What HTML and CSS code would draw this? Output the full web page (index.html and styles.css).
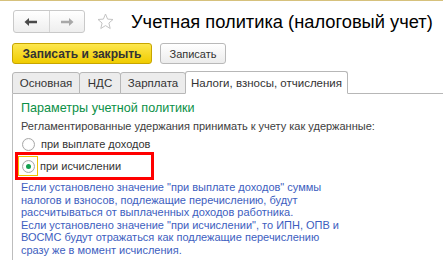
FILE: index.html
```html
<!DOCTYPE html>
<html lang="ru">
<head>
<meta charset="utf-8">
<link rel="stylesheet" href="styles.css">
</head>
<body>
<div class="topline"></div>
<div class="header">
  <div class="nav">
    <div class="navbtn"><svg width="14" height="10" viewBox="0 0 14 10"><path d="M0.5 5 L5 1 L5 3.8 L13 3.8 L13 6.2 L5 6.2 L5 9 Z" fill="#4a4a4a"/></svg></div>
    <div class="navbtn"><svg width="14" height="10" viewBox="0 0 14 10"><path d="M13.5 5 L9 1 L9 3.8 L1 3.8 L1 6.2 L9 6.2 L9 9 Z" fill="#a8a8a8"/></svg></div>
  </div>
  <svg class="star" width="17" height="17" viewBox="0 0 17 17"><path d="M8.5 1 L10.6 6.1 L16 6.5 L11.9 10 L13.2 15.5 L8.5 12.6 L3.8 15.5 L5.1 10 L1 6.5 L6.4 6.1 Z" fill="none" stroke="#c4c4c4" stroke-width="1"/></svg>
  <h1 class="title">Учетная политика (налоговый учет)</h1>
</div>
<div class="toolbar">
  <button class="btn primary">Записать и закрыть</button>
  <button class="btn">Записать</button>
</div>
<div class="tabs">
  <div class="tab t1">Основная</div>
  <div class="tab t2">НДС</div>
  <div class="tab t3">Зарплата</div>
  <div class="tab active">Налоги, взносы, отчисления</div>
  <div class="tabfill"></div>
</div>
<div class="panel">
  <div class="section">Параметры учетной политики</div>
  <div class="label">Регламентированные удержания принимать к учету как удержанные:</div>
  <div class="option">
    <span class="radio"></span><span class="optext">при выплате доходов</span>
  </div>
  <div class="redbox">
    <span class="focus"><span class="radio checked"></span></span><span class="optext2">при исчислении</span>
  </div>
  <div class="hint">Если установлено значение "при выплате доходов" суммы<br>налогов и взносов, подлежащие перечислению, будут<br>рассчитываться от выплаченных доходов работника.<br>Если установлено значение "при исчислении", то ИПН, ОПВ и<br>ВОСМС будут отражаться как подлежащие перечислению<br>сразу же в момент исчисления.</div>
</div>
</body>
</html>
```
FILE: styles.css
```css
html, body {
  margin: 0;
  padding: 0;
  background: #fff;
  width: 443px;
  height: 260px;
  overflow: hidden;
  font-family: "Liberation Sans", Arial, sans-serif;
  font-size: 11px;
  color: #333;
}
.topline {
  height: 1px;
  background: #d6c17c;
}
.header {
  display: flex;
  align-items: center;
  padding: 9px 0 0 13px;
  height: 23px;
}
.nav {
  flex-shrink: 0;
  display: flex;
  width: 72px;
  height: 23px;
  box-sizing: border-box;
  border: 1px solid #c9c9c9;
  border-radius: 3px;
  background: linear-gradient(#ffffff, #eeeeee);
}
.navbtn {
  flex: 1;
  display: flex;
  align-items: center;
  justify-content: center;
}
.navbtn + .navbtn {
  border-left: 1px solid #d4d4d4;
}
.star {
  flex-shrink: 0;
  margin-left: 12px;
}
.title {
  flex-shrink: 0;
  margin: 0 0 0 17px;
  font-weight: normal;
  font-size: 18.3px;
  line-height: 23px;
  color: #000;
  white-space: nowrap;
}
.toolbar {
  display: flex;
  gap: 8px;
  padding: 10px 0 0 12px;
}
.btn {
  flex-shrink: 0;
  height: 21px;
  box-sizing: border-box;
  border: 1px solid #b9b9b9;
  border-radius: 3px;
  background: linear-gradient(#ffffff, #ececec);
  font-family: "Liberation Sans", Arial, sans-serif;
  font-size: 11px;
  color: #333;
  padding: 0;
  width: 66px;
  white-space: nowrap;
}
.btn.primary {
  width: 140px;
  background: linear-gradient(#fde74f, #f0cc00);
  border-color: #c7a500;
  font-weight: bold;
  font-size: 12px;
  color: #333;
}
.tabs {
  display: flex;
  align-items: flex-end;
  margin-top: 7px;
  padding-left: 12px;
  height: 23px;
}
.tab {
  flex-shrink: 0;
  box-sizing: border-box;
  height: 22px;
  line-height: 20px;
  text-align: center;
  background: #ececec;
  border: 1px solid #b7b7b7;
  border-radius: 3px 3px 0 0;
  margin-right: -1px;
  white-space: nowrap;
  font-size: 11.5px;
}
.t1 { width: 68px; }
.t2 { width: 42px; }
.t3 { width: 66px; }
.tab.active {
  width: 163px;
  height: 23px;
  background: #fff;
  border-bottom-color: #fff;
  line-height: 22px;
  position: relative;
  z-index: 1;
}
.tabfill {
  flex: 1;
  border-bottom: 1px solid #b7b7b7;
}
.panel {
  margin-left: 12px;
  border-left: 1px solid #bdbdbd;
  padding: 6px 0 0 8px;
  height: 161px;
  box-sizing: content-box;
}
.section {
  color: #0a9046;
  font-size: 12.6px;
  line-height: 16px;
}
.label {
  margin-top: 3px;
  line-height: 14px;
  color: #404040;
}
.option {
  display: flex;
  align-items: center;
  height: 16px;
  margin-top: 3px;
  padding-left: 1px;
}
.optext {
  margin-left: 6px;
}
.radio {
  flex-shrink: 0;
  width: 13px;
  height: 13px;
  box-sizing: border-box;
  border: 1px solid #a8a8a8;
  border-radius: 50%;
  background: radial-gradient(circle, #fff 50%, #ececec);
  display: flex;
  align-items: center;
  justify-content: center;
}
.radio.checked::after {
  content: "";
  width: 5px;
  height: 5px;
  border-radius: 50%;
  background: #12a050;
}
.redbox {
  display: flex;
  align-items: center;
  box-sizing: border-box;
  width: 139px;
  height: 28px;
  margin-left: -6px;
  border: 3px solid #f00;
}
.focus {
  flex-shrink: 0;
  width: 20px;
  height: 20px;
  box-sizing: border-box;
  border: 1px solid #f0c000;
  display: flex;
  align-items: center;
  justify-content: center;
}
.optext2 {
  margin-left: 2px;
}
.hint {
  color: #3d5ec0;
  line-height: 12.6px;
  margin-top: 1px;
}
```
